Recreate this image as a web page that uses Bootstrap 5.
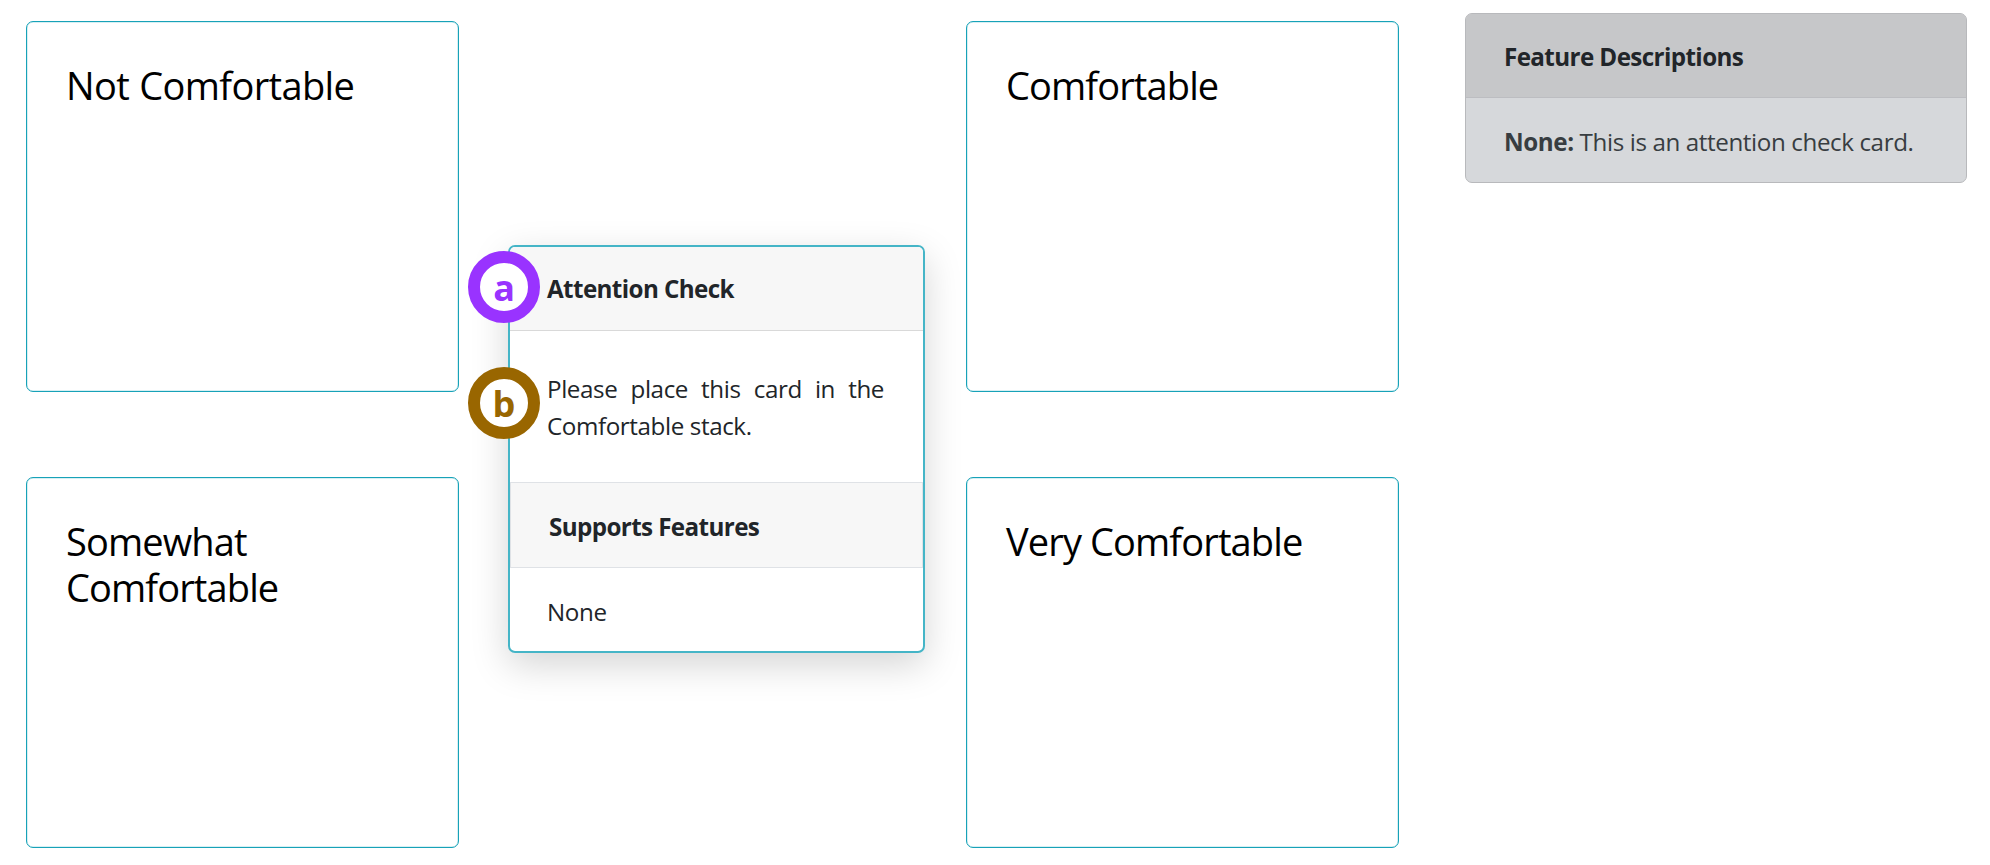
<!DOCTYPE html>
<html lang="en">
<head>
<meta charset="utf-8">
<meta name="viewport" content="width=device-width, initial-scale=1">
<title>Card sorting</title>
<link href="https://cdn.jsdelivr.net/npm/bootstrap@5.3.0/dist/css/bootstrap.min.css" rel="stylesheet">
<style>
body{font-family:"Open Sans","Noto Sans",sans-serif;font-size:24.2px;line-height:37px;letter-spacing:-.4px;color:#212529;background:#fff}
.board{padding:0 23px 0 26px}
.card{--bs-card-border-radius:7px;--bs-card-inner-border-radius:5px;--bs-card-border-color:#17a2b8}
.stacks{width:433px;padding-top:21px;gap:85px}
.stack-card{height:371px;padding:40px 39px;box-shadow:inset 0 0 0 .5px rgba(23,162,184,.35)}
.stack-card h2{font-size:38px;line-height:46.4px;letter-spacing:-.88px;font-weight:400;color:#000;margin:0}
.stack-card .loose{letter-spacing:-.65px;word-spacing:1px}
.sort-card{width:417px;margin:245px 41px 0 49px;box-shadow:0 12px 37px rgba(0,0,0,.17);border:2px solid #45b5c7}
.sort-card,.feature-card{font-size:24.2px}
.card-header,.group-head{font-weight:700;letter-spacing:-.6px;font-size:24.2px;line-height:37px}
.sort-card .card-header{padding:23px 37px;height:84px;background:#f7f7f7;border-bottom:1px solid #d9d9d9}
.sort-card .card-body{padding:39px 39px 0 37px;height:151px;text-align:justify;flex:none}
.group-head{height:86px;padding:25px 38px;background:#f7f7f7;border:1px solid #dfe2e6}
.group-item{height:83px;padding:25px 37px 0}
.feature-card{width:502px;margin:13px 0 0 66px;background:#d6d8db;--bs-card-border-color:#b8b9bc}
.feature-card .card-header{height:84px;padding:24px 38px 0;background:#c6c7c9;border-bottom:1px solid #bcbdc1}
.feature-card .card-body{height:84px;padding:25px 38px 0;color:#383d41;flex:none;white-space:nowrap}
.tag{position:absolute;left:-42px;width:72px;height:72px;border:12px solid;border-radius:50%;background:#fff;font-size:36px;line-height:49px;font-weight:700;letter-spacing:0;text-align:center}
.tag-a{top:4px;color:#9933ff}
.tag-b{top:120px;color:#996600}
</style>
</head>
<body>
<main class="board d-flex align-items-start">
  <section class="stacks d-flex flex-column flex-shrink-0">
    <div class="card stack-card"><h2 class="loose">Not Comfortable</h2></div>
    <div class="card stack-card"><h2>Somewhat Comfortable</h2></div>
  </section>
  <article class="card sort-card flex-shrink-0">
    <div class="card-header">Attention Check</div>
    <div class="card-body">Please place this card in the Comfortable stack.</div>
    <div class="group-head">Supports Features</div>
    <div class="group-item">None</div>
    <span class="tag tag-a">a</span>
    <span class="tag tag-b">b</span>
  </article>
  <section class="stacks d-flex flex-column flex-shrink-0">
    <div class="card stack-card"><h2>Comfortable</h2></div>
    <div class="card stack-card"><h2>Very Comfortable</h2></div>
  </section>
  <aside class="card feature-card flex-shrink-0">
    <div class="card-header">Feature Descriptions</div>
    <div class="card-body"><b>None:</b> This is an attention check card.</div>
  </aside>
</main>
<script src="https://cdn.jsdelivr.net/npm/bootstrap@5.3.0/dist/js/bootstrap.bundle.min.js"></script>
</body>
</html>
